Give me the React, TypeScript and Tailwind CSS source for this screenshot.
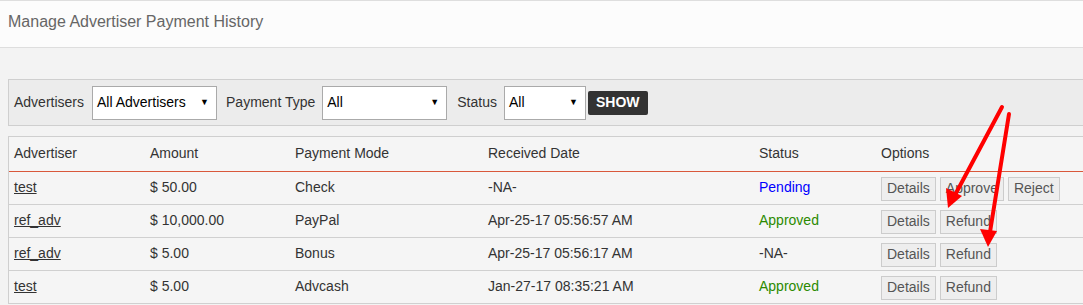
import React from 'react';

type Row = {
  advertiser: string;
  amount: string;
  mode: string;
  date: string;
  status: string;
  options: string[];
};

const rows: Row[] = [
  { advertiser: 'test', amount: '$ 50.00', mode: 'Check', date: '-NA-', status: 'Pending', options: ['Details', 'Approve', 'Reject'] },
  { advertiser: 'ref_adv', amount: '$ 10,000.00', mode: 'PayPal', date: 'Apr-25-17 05:56:57 AM', status: 'Approved', options: ['Details', 'Refund'] },
  { advertiser: 'ref_adv', amount: '$ 5.00', mode: 'Bonus', date: 'Apr-25-17 05:56:17 AM', status: '-NA-', options: ['Details', 'Refund'] },
  { advertiser: 'test', amount: '$ 5.00', mode: 'Advcash', date: 'Jan-27-17 08:35:21 AM', status: 'Approved', options: ['Details', 'Refund'] },
];

const statusClass = (s: string) => {
  if (s === 'Pending') return 'text-[#0000ff]';
  if (s === 'Approved') return 'text-[#2b8a00]';
  return 'text-[#333]';
};

const Select = ({ value, width }: { value: string; width: string }) => (
  <div className={`${width} h-[34px] bg-white border border-[#aaa] flex items-center justify-between pl-[4px] pr-[7px] text-[14px] text-black`}>
    <span>{value}</span>
    <span className="text-[9px]">▼</span>
  </div>
);

const App = () => {
  return (
    <div className="relative w-[1083px] h-[305px] overflow-hidden bg-[#f3f3f3] font-['Liberation_Sans',Arial,sans-serif]">
      {/* Page header */}
      <div className="h-[48px] bg-[#fcfcfc] border-t border-b border-[#dedede] flex items-center pl-[8px]">
        <h1 className="text-[16px] text-[#666] mt-[-4px]">Manage Advertiser Payment History</h1>
      </div>

      {/* Filters */}
      <div className="ml-[8px] mt-[31px] w-[1100px] h-[47px] bg-[#ececec] border border-[#cfcfcf] flex items-center pl-[5px] text-[14px] text-[#333]">
        <span className="mr-[8px]">Advertisers</span>
        <Select value="All Advertisers" width="w-[125px]" />
        <span className="ml-[9px] mr-[7px]">Payment Type</span>
        <Select value="All" width="w-[125px]" />
        <span className="ml-[10px] mr-[7px]">Status</span>
        <Select value="All" width="w-[82px]" />
        <button className="ml-[2px] h-[24px] px-[8px] bg-[#333] text-white font-bold text-[14px] rounded-[2px]">SHOW</button>
      </div>

      {/* Table */}
      <div className="ml-[8px] mt-[10px] w-[1100px] border-t border-l border-[#cfcfcf] bg-[#f5f5f5]">
        <table className="w-full table-fixed border-collapse text-[14px] text-[#333]">
          <thead>
            <tr className="h-[34px] border-b border-[#d9583b]">
              <th className="w-[141px] text-left font-normal pl-[5px]">Advertiser</th>
              <th className="w-[145px] text-left font-normal">Amount</th>
              <th className="w-[193px] text-left font-normal">Payment Mode</th>
              <th className="w-[271px] text-left font-normal">Received Date</th>
              <th className="w-[122px] text-left font-normal">Status</th>
              <th className="text-left font-normal">Options</th>
            </tr>
          </thead>
          <tbody>
            {rows.map((r, i) => (
              <tr key={i} className="h-[33px] border-b border-[#d0d0d0]">
                <td className="pl-[5px]"><a className="underline text-[#333]">{r.advertiser}</a></td>
                <td>{r.amount}</td>
                <td>{r.mode}</td>
                <td>{r.date}</td>
                <td className={statusClass(r.status)}>{r.status}</td>
                <td>
                  <div className="flex gap-[4px] pt-[2px]">
                    {r.options.map((o) => (
                      <button key={o} className="h-[24px] px-[5px] bg-[#eeeeee] border border-[#cccccc] text-[#555] text-[14px]">{o}</button>
                    ))}
                  </div>
                </td>
              </tr>
            ))}
          </tbody>
        </table>
      </div>

      {/* Annotation arrows */}
      <svg className="absolute left-0 top-0 pointer-events-none" width="1083" height="305">
        <line x1="1002" y1="107" x2="955" y2="195" stroke="#ff0000" strokeWidth="4" strokeLinecap="round" />
        <polygon points="948,208 946,188 962,196" fill="#ff0000" />
        <line x1="1009" y1="114" x2="990" y2="232" stroke="#ff0000" strokeWidth="4" strokeLinecap="round" />
        <polygon points="988,247 980,229 997,231" fill="#ff0000" />
      </svg>
    </div>
  );
};

export default App;
